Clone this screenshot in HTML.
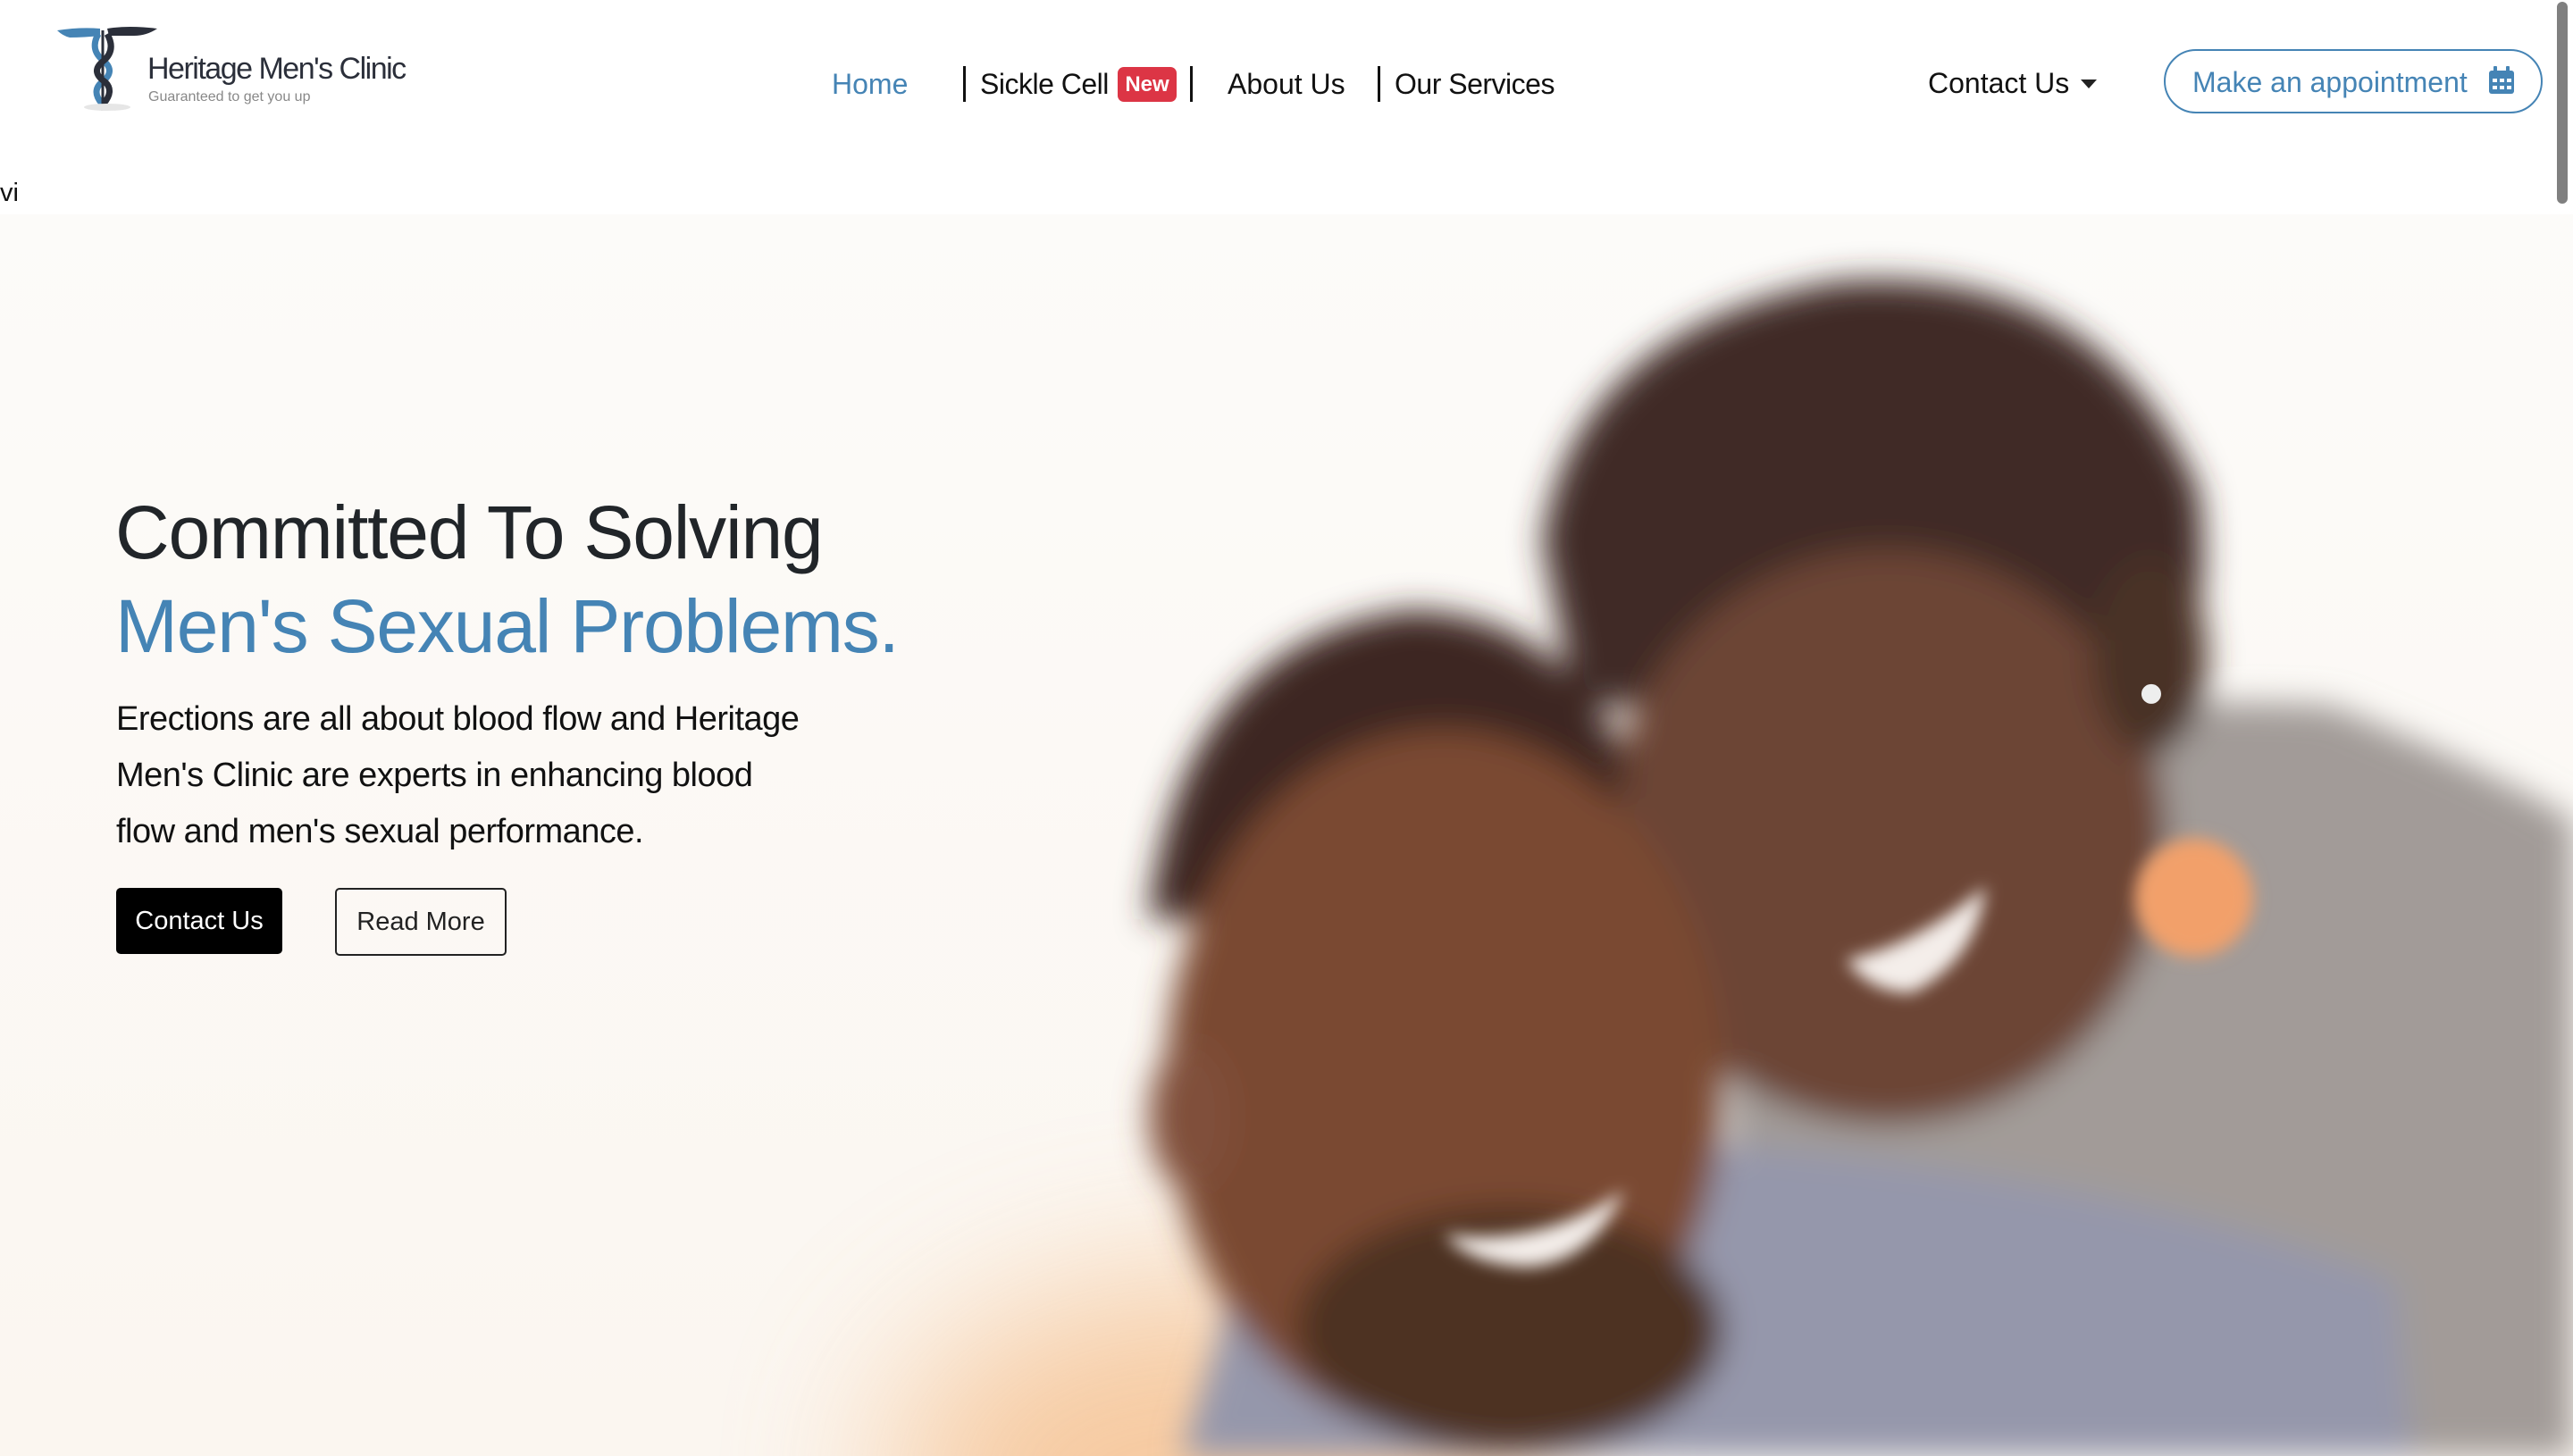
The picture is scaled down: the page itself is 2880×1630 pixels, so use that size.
<!DOCTYPE html>
<html><head><meta charset="utf-8">
<style>
html,body{margin:0;padding:0;width:2880px;height:1630px;overflow:hidden;background:#fff;font-family:"Liberation Sans",Arial,sans-serif;}
.abs{position:absolute;}
.nav{font-size:32px;color:#111;top:76px;white-space:nowrap;}
.sep{position:absolute;width:3px;background:#111;top:74px;height:40px;}
</style></head><body>
<svg class="abs" style="left:60px;top:28px" width="130" height="100" viewBox="0 0 130 100">
  <path d="M4 6 Q30 2 52 4 L52 12 Q34 14 18 14 Q10 12 4 6Z" fill="#4584b5"/>
  <path d="M60 4 Q84 0 116 4 Q104 12 90 12 L72 12 L62 12Z" fill="#2b2f3a"/>
  <path d="M50 10 Q40 28 56 40 Q70 52 54 64 Q42 74 54 88" stroke="#4584b5" stroke-width="7" fill="none"/>
  <path d="M60 10 Q70 28 56 40 Q40 52 58 64 Q68 74 56 88" stroke="#2b2f3a" stroke-width="7" fill="none"/>
  <line x1="55" y1="6" x2="55" y2="96" stroke="#2b2f3a" stroke-width="3"/>
  <ellipse cx="60" cy="92" rx="26" ry="4" fill="#e6e6e6"/>
</svg>
<div class="abs" style="left:165px;top:58px;font-size:34px;color:#2b2f3a;letter-spacing:-1.5px">Heritage Men's Clinic</div>
<div class="abs" style="left:166px;top:100px;font-size:16px;color:#888">Guaranteed to get you up</div>

<div class="abs nav" style="left:931px;color:#4584b5">Home</div>
<div class="sep" style="left:1078px"></div>
<div class="abs nav" style="left:1097px;letter-spacing:-0.5px">Sickle Cell</div>
<div class="abs" style="left:1251px;top:75px;width:66px;height:39px;background:#dc3545;border-radius:7px;color:#fff;font-weight:bold;font-size:24px;text-align:center;line-height:39px">New</div>
<div class="sep" style="left:1332px"></div>
<div class="abs nav" style="left:1374px">About Us</div>
<div class="sep" style="left:1542px"></div>
<div class="abs nav" style="left:1561px;letter-spacing:-0.5px">Our Services</div>
<div class="abs nav" style="left:2158px;top:75px">Contact Us</div>
<div class="abs" style="left:2329px;top:89px;width:0;height:0;border-left:9px solid transparent;border-right:9px solid transparent;border-top:10px solid #222"></div>
<div class="abs" style="left:2422px;top:55px;width:420px;height:68px;border:2px solid #4584b5;border-radius:36px"></div>
<div class="abs" style="left:2454px;top:74px;font-size:32px;color:#4584b5">Make an appointment</div>
<svg class="abs" style="left:2786px;top:74px" width="30" height="32" viewBox="0 0 30 32">
  <rect x="0" y="5" width="28" height="26" rx="3" fill="#4584b5"/>
  <rect x="5" y="0" width="4" height="8" rx="1" fill="#4584b5"/><rect x="19" y="0" width="4" height="8" rx="1" fill="#4584b5"/>
  <g fill="#fff"><rect x="4" y="14" width="5" height="4"/><rect x="12" y="14" width="5" height="4"/><rect x="20" y="14" width="5" height="4"/>
  <rect x="4" y="22" width="5" height="4"/><rect x="12" y="22" width="5" height="4"/><rect x="20" y="22" width="5" height="4"/></g>
</svg>
<div class="abs" style="left:2862px;top:2px;width:12px;height:226px;background:#808080;border-radius:6px"></div>
<div class="abs" style="left:0;top:200px;font-size:29px;color:#111">vi</div>

<svg class="abs" style="left:0;top:240px" width="2880" height="1390" viewBox="0 131 1568 756" preserveAspectRatio="none">
  <defs>
    <filter id="b" x="-20%" y="-20%" width="140%" height="140%"><feGaussianBlur stdDeviation="10"/></filter>
    <filter id="b3" x="-50%" y="-50%" width="200%" height="200%"><feGaussianBlur stdDeviation="5"/></filter>
    <filter id="b2" x="-50%" y="-50%" width="200%" height="200%"><feGaussianBlur stdDeviation="50"/></filter>
    <linearGradient id="bg" x1="0" y1="0" x2="0" y2="1"><stop offset="0" stop-color="#fcfbf9"/><stop offset="1" stop-color="#fbf6f0"/></linearGradient>
  </defs>
  <rect x="0" y="131" width="1568" height="756" fill="url(#bg)"/>
  <ellipse cx="740" cy="900" rx="200" ry="120" fill="#f5c08e" filter="url(#b2)" opacity="0.8"/>
  <g filter="url(#b)">
    <path d="M1050 470 Q1250 420 1420 430 Q1520 470 1568 500 L1568 887 L1060 887Z" fill="#a29b98"/>
    <path d="M760 760 Q900 690 1080 700 Q1300 720 1460 780 L1470 887 L720 887Z" fill="#9597ab"/>
    <path d="M940 330 Q960 200 1120 172 Q1280 160 1340 300 Q1350 380 1320 430 L960 430Z" fill="#3f2c25"/>
    <ellipse cx="1150" cy="510" rx="170" ry="175" fill="#6c4535"/>
    <ellipse cx="1310" cy="400" rx="35" ry="60" fill="#4a3028"/>
    <path d="M700 560 Q720 390 860 372 Q950 375 990 460 L980 560Z" fill="#3d2822"/>
    <ellipse cx="880" cy="660" rx="170" ry="215" fill="#7a4a33"/>
    <ellipse cx="920" cy="810" rx="130" ry="75" fill="#4e3024"/>
    <ellipse cx="725" cy="680" rx="25" ry="45" fill="#80503a"/>
  </g>
  <path d="M880 752 Q940 760 990 725 Q970 770 930 772 Q895 770 880 752Z" fill="#f4eeea" filter="url(#b3)"/>
  <path d="M1125 585 Q1170 575 1210 540 Q1205 585 1165 605 Q1140 605 1125 585Z" fill="#f4eeea" filter="url(#b3)"/>
  <circle cx="1337" cy="547" r="36" fill="#f2a06a" filter="url(#b3)"/>
  <circle cx="1311" cy="423" r="6" fill="#eee"/>
</svg>

<div class="abs" style="left:129px;top:548px;font-size:84px;color:#212529;letter-spacing:-1.2px;white-space:nowrap">Committed To Solving</div>
<div class="abs" style="left:129px;top:653px;font-size:84px;color:#4584b5;letter-spacing:-1.2px;white-space:nowrap">Men's Sexual Problems.</div>
<div class="abs" style="left:130px;top:774px;font-size:38px;line-height:63px;color:#111;letter-spacing:-0.5px;width:960px">Erections are all about blood flow and Heritage<br>Men's Clinic are experts in enhancing blood<br>flow and men's sexual performance.</div>
<div class="abs" style="left:130px;top:994px;width:186px;height:74px;background:#000;border-radius:5px;color:#fff;font-size:29px;line-height:74px;text-align:center">Contact Us</div>
<div class="abs" style="left:375px;top:994px;width:188px;height:72px;border:2px solid #222;border-radius:5px;color:#222;font-size:29px;line-height:72px;text-align:center">Read More</div>
</body></html>
